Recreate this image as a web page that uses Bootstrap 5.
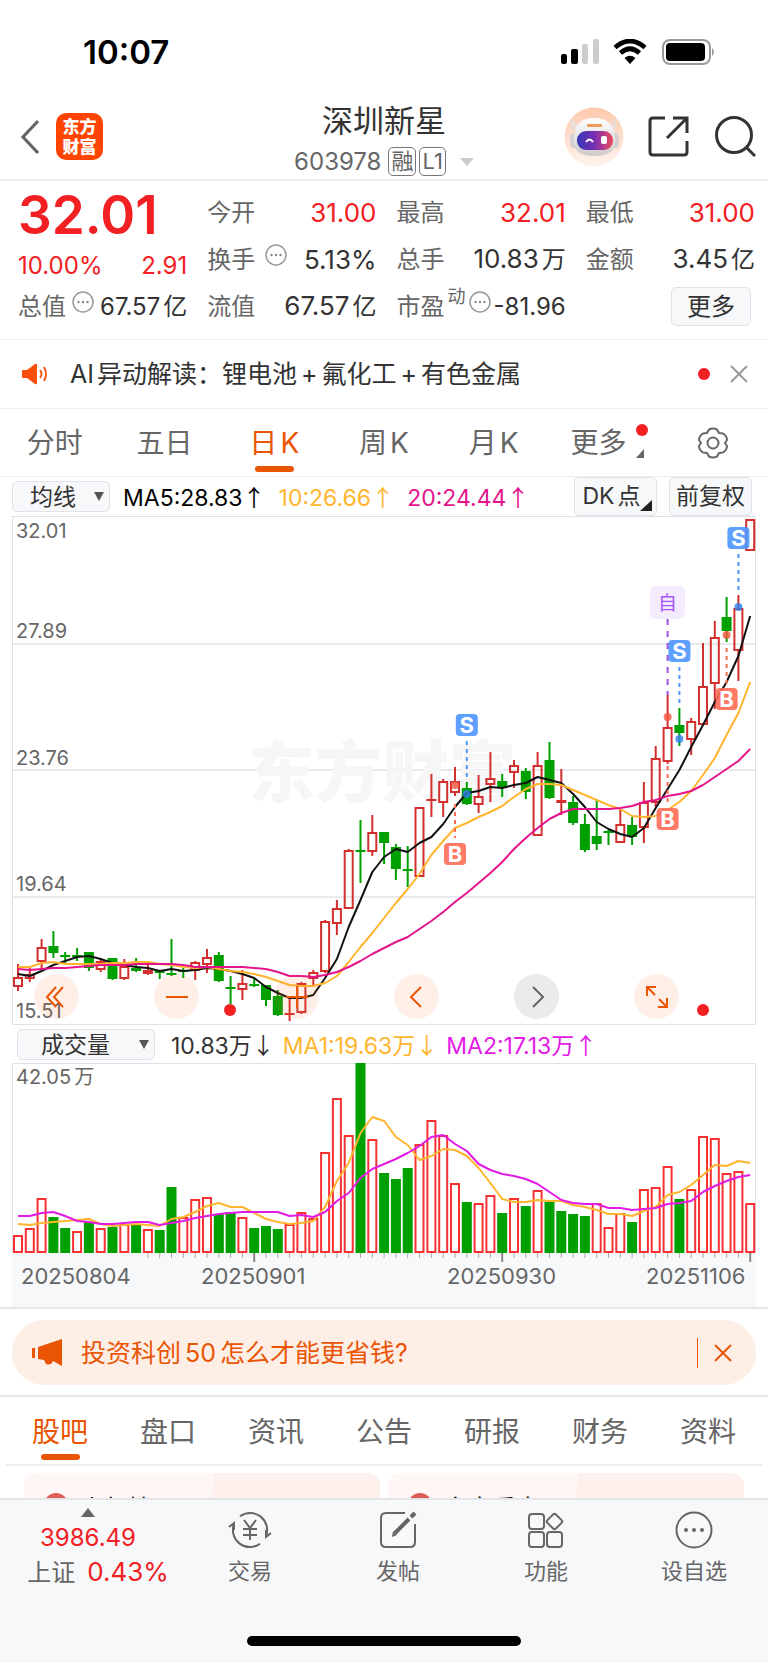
<!DOCTYPE html>
<html lang="zh-CN">
<head>
<meta charset="utf-8">
<meta name="viewport" content="width=device-width, initial-scale=1">
<title>深圳新星 603978</title>
<link href="https://cdn.jsdelivr.net/npm/bootstrap@5.3.0/dist/css/bootstrap.min.css" rel="stylesheet">
<style>
:root{--up:#f22023;--brand:#ea5504;--label:#666;--ink:#333;--rule:#e6e7eb;--panel:#f7f8fa;--cn:Inter,"Noto Sans CJK SC",sans-serif}
body{font-family:var(--cn);color:var(--ink);background:#fff;font-size:24px;line-height:32px}
button,select{font-family:inherit;color:inherit}
.plain{background:none;border:0;padding:0;line-height:1}
svg{display:block}
.up{color:var(--up)}
.lbl{color:var(--label)}
.brand{color:var(--brand)}
.rule-b{border-bottom:1px solid #efefef}
.status{height:100px;padding:3px 53px 0 83px}
.clock{font-size:33px;font-weight:600;color:#000}
.topbar{display:grid;grid-template-columns:1fr auto 1fr;height:81px;padding:0 12px 2px;border-bottom:2px solid #ececec}
.logo{width:47px;height:47px;border-radius:10px;background:#ff4400;color:#fff;font:900 17px/20px "Noto Sans CJK SC",sans-serif;padding-top:3px}
.stock{font-size:31px;line-height:40px;font-weight:400;margin:0 0 6px}
.code{font-size:24px;line-height:30px;color:var(--label);gap:3px}
.tagbox{border:1px solid #777;border-radius:5px;font-size:22px;line-height:27px;padding:0 2px}
.caret{margin-left:11px}
.quote{display:grid;grid-template-columns:repeat(4,1fr);grid-auto-rows:47px;column-gap:20px;padding:8px 13px 8px 18px;height:159px}
.quote>div{display:flex;justify-content:space-between;align-items:center}
.quote>.price{font-size:53px;line-height:47px;font-weight:600;padding-top:6px}
.quote>.change{padding-top:12px}
.num{font-size:26px}
.sup{font-size:18px;line-height:20px;align-self:flex-start}
.info{align-self:flex-start;margin-top:8px}
.more{background:var(--panel);border:1px solid #dfe2e8;border-radius:5px;width:80px;height:39px;line-height:1}
.wan{margin-left:3px}
.num .wan{font-size:24px}
.notice{height:69px;padding:0 16px 0 22px;font-size:25px}
.notice-text{margin-left:22px}
.dot{width:12px;height:12px;border-radius:50%;background:var(--up)}
.tabs{display:grid;grid-template-columns:repeat(7,1fr);font-size:28px}
.tabs a{color:var(--label);text-decoration:none;position:relative;display:flex;justify-content:center;align-items:center}
.tabs a.on{color:var(--brand)}
.tabs a.on::after{content:"";position:absolute;bottom:4px;width:39px;height:6px;border-radius:3px;background:var(--brand)}
.period{height:68px}
.tabs .more-tab{padding-right:10px}
.flag{position:absolute;top:15px;right:10px}
.corner{position:absolute;bottom:18px;right:14px}
.ma{height:39px;padding:0 16px 0 12px;font-size:23px}
.read{white-space:nowrap}
.ma .read{margin-left:13px}
.vol .read+.read{margin-left:8px}
.arr{font-family:"Noto Sans CJK SC",sans-serif}
.c-ma10{color:#ffb52e}.c-ma20{color:#e4148c}.c-vol2{color:#e31ae6}
.pick{position:relative}
.pick select{appearance:none;background:var(--panel);border:1px solid #dfe2e8;border-radius:5px;height:31px;line-height:28px;padding:0}
.pick svg{position:absolute;top:11px;right:6px;pointer-events:none}
.pick-ma select{width:98px;padding-left:17px}
.pick-vol select{width:138px;padding-left:23px}
.flat{background:var(--panel);border:1px solid #dfe2e8;border-radius:5px;width:83px;height:39px;line-height:1;padding:0;position:relative}
.flat+.flat{margin-left:12px}
.ctl{position:absolute;left:0;right:0;bottom:6px;padding-left:34px;gap:75px}
.ctl button{width:45px;height:45px;border-radius:50%;background:rgba(255,105,40,.11);display:flex;align-items:center;justify-content:center;color:var(--brand)}
.ctl button.off{background:#ebebeb;color:var(--label)}
.vol{height:38px;padding:1px 17px 0;font-size:23px}
.tip{border-top:2px solid var(--rule);border-bottom:2px solid var(--rule);padding:11px 12px 12px;height:90px}
.tip>div{background:#fdeee6;border-radius:33px;height:65px;padding:0 20px;font-size:25px}
.tip-text{margin-left:17px}
.bar{width:1px;height:30px;background:var(--brand)}
.section{height:69px;margin:0 6px;border-bottom:2px solid #ececef}
.section a{padding-top:3px}
.cards{height:32px;overflow:hidden;padding:7px 24px 0;gap:8px}
.cards>a{flex:1;height:90px;border-radius:12px;background:linear-gradient(96deg,#fff7f5 52%,#fef0ed 52%);padding:20px;gap:12px;color:#111;font-size:24px;text-decoration:none;align-items:flex-start}
.cards i{width:24px;height:24px;border-radius:50%;background:#e05a56}
.dock{flex:1;background:var(--panel);border-top:2px solid #e4e5e9}
.dock-row{display:grid;grid-template-columns:176px repeat(4,1fr);height:92px}
.dock-row a{color:var(--label);text-decoration:none;font-size:22px;line-height:30px;display:flex;flex-direction:column;align-items:center;padding-top:11px;gap:7px}
.dock-row a.index{font-size:24px;padding-top:8px;gap:0}
.index span{line-height:34px}
.index .pair{padding-left:20px}
.home{width:274px;height:10px;border-radius:5px;background:#000;margin:44px auto 0}
.axis{font-size:20px;fill:#666;font-family:var(--cn)}
.date{font-size:22px}
</style>
</head>
<body>
<div class="d-flex flex-column min-vh-100">
<div class="status d-flex justify-content-between align-items-center">
  <span class="clock">10:07</span>
  <svg width="156" height="26" viewBox="0 0 156 26">
    <g><rect x="2" y="15" width="6" height="10" rx="2"/><rect x="12" y="10" width="7" height="15" rx="2"/><rect x="23" y="5" width="6" height="20" rx="2" fill="#ccc"/><rect x="34" y="0" width="6" height="25" rx="2" fill="#ccc"/></g>
    <g fill="none" stroke="#000" stroke-width="4.6"><path d="M56 8.500Q71 -4.500 86 8.500"/><path d="M61.500 14Q71 5.500 80.500 14"/></g><path d="M65.500 19Q71 14.500 76.500 19L71 25Z"/>
    <rect x="104" y="1" width="47" height="24" rx="7" fill="none" stroke="#9a9a9a" stroke-width="2"/><rect x="107" y="4" width="39" height="18" rx="4"/><path d="M153 9q4 3.500 0 8z" fill="#999"/>
  </svg>
</div>

<header class="topbar align-items-center">
  <div class="d-flex align-items-center pb-1 ps-2">
    <button class="plain" aria-label="返回"><svg width="20" height="36" viewBox="0 0 20 36"><path d="M18 2L3 18L18 34" fill="none" stroke="#666" stroke-width="3.200"/></svg></button>
    <div class="logo text-center ms-3">东方<br>财富</div>
  </div>
  <div class="text-center">
    <h1 class="stock">深圳新星</h1>
    <div class="code d-flex align-items-center justify-content-center"><span class="me-1">603978</span><span class="tagbox">融</span><span class="tagbox">L1</span><svg class="caret" width="14" height="8"><path d="M0 0H14L7 8Z" fill="#ccc"/></svg></div>
  </div>
  <div class="d-flex align-items-center justify-content-end pb-1">
    <button class="plain" aria-label="智能助手"><svg width="60" height="60" viewBox="0 0 60 60">
      <defs><linearGradient id="peach" x2="0" y2="1"><stop stop-color="#fdc9ae"/><stop offset="1" stop-color="#fff4ee"/></linearGradient><linearGradient id="visor"><stop stop-color="#3437b5"/><stop offset=".5" stop-color="#7a2fb0"/><stop offset="1" stop-color="#ef4d5c"/></linearGradient><linearGradient id="shell" x2="0" y2="1"><stop stop-color="#fff"/><stop offset="1" stop-color="#cfcaca"/></linearGradient></defs>
      <circle cx="30" cy="30" r="29.500" fill="url(#peach)"/>
      <path d="M9 11Q4 18 10 23L16 18Q9 17 9 11ZM50 11Q55 18 50 23L44 18Q51 17 50 11Z" fill="#eaddda"/>
      <rect x="6" y="26" width="9" height="15" rx="4" fill="#d5d0d3"/><rect x="46" y="26" width="9" height="15" rx="4" fill="#d5d0d3"/>
      <path d="M10 30C11 18 17 11 30 11S50 18 51 30C52 43 46 49 30 49S9 43 10 30Z" fill="url(#shell)"/>
      <rect x="23" y="17" width="15" height="3" rx="1" fill="#ef9a55"/>
      <rect x="13" y="24" width="36" height="19" rx="9" fill="url(#visor)"/>
      <path d="M22 35q3.500-5 7 0" fill="none" stroke="#fff" stroke-width="2"/><rect x="37" y="29" width="6" height="8" rx="2" fill="#fff"/></svg></button>
    <button class="plain ms-4" aria-label="分享"><svg width="42" height="42" viewBox="0 0 42 42" fill="none" stroke="#333" stroke-width="3"><path d="M17 2H5Q2 2 2 5V36Q2 39 5 39H36Q39 39 39 36V25M25 2H39V17M38 3L19 22"/></svg></button>
    <button class="plain ms-4" aria-label="搜索"><svg width="42" height="42" viewBox="0 0 42 42" fill="none" stroke="#333" stroke-width="3"><circle cx="20" cy="19" r="17.500"/><path d="M32 31L41 40"/></svg></button>
  </div>
</header>

<section class="quote rule-b">
  <div class="price up">32.01</div>
  <div><span class="lbl">今开</span><span class="num up">31.00</span></div>
  <div><span class="lbl">最高</span><span class="num up">32.01</span></div>
  <div><span class="lbl">最低</span><span class="num up">31.00</span></div>
  <div class="change up"><span>10.00%</span><span>2.91</span></div>
  <div><span class="lbl">换手</span><svg class="info me-2" width="22" height="22"><use href="#info"/></svg><span class="num">5.13%</span></div>
  <div><span class="lbl">总手</span><span class="num">10.83<span class="wan">万</span></span></div>
  <div><span class="lbl">金额</span><span class="num">3.45<span class="wan">亿</span></span></div>
  <div><span class="lbl">总值</span><svg class="info" width="22" height="22"><use href="#info"/></svg><span>67.57<span class="wan">亿</span></span></div>
  <div><span class="lbl">流值</span><span class="num">67.57<span class="wan">亿</span></span></div>
  <div><span class="lbl">市盈</span><span class="sup lbl mt-1">动</span><svg class="info" width="22" height="22"><use href="#info"/></svg><span>-81.96</span></div>
  <div class="justify-content-end pe-1"><button class="more">更多</button></div>
</section>
<svg class="d-none"><symbol id="info" viewBox="0 0 22 22"><circle cx="11" cy="11" r="10" fill="none" stroke="#999" stroke-width="1.500"/><g fill="#888"><circle cx="6.500" cy="11" r="1.200"/><circle cx="11" cy="11" r="1.200"/><circle cx="15.500" cy="11" r="1.200"/></g></symbol></svg>

<section class="notice rule-b d-flex align-items-center">
  <svg width="26" height="22" viewBox="0 0 26 22"><path d="M1 7H5L13 1Q15 0 15 2V20Q15 22 13 21L5 15H1Q0 15 0 14V8Q0 7 1 7Z" fill="#fa4d05"/><g fill="none" stroke="#fa4d05" stroke-width="1.800"><path d="M18 7q3 4 0 8M22 4q4 7 0 14"/></g></svg>
  <span class="notice-text">AI<span class="wan">异动解读：锂电池</span><span class="mx-1">+</span>氟化工<span class="mx-1">+</span>有色金属</span>
  <span class="dot ms-auto"></span>
  <button class="plain ms-3 px-1" aria-label="关闭"><svg width="18" height="18"><path d="M1 1L17 17M17 1L1 17" stroke="#999" stroke-width="2"/></svg></button>
</section>

<nav class="tabs period rule-b">
  <a href="#">分时</a><a href="#">五日</a><a href="#" class="on">日<span class="wan">K</span></a><a href="#">周<span class="wan">K</span></a><a href="#">月<span class="wan">K</span></a>
  <a href="#" class="more-tab">更多<span class="dot flag"></span><svg class="corner" width="8" height="9"><path d="M8 0V9H0Z" fill="#666"/></svg></a>
  <a href="#" aria-label="设置"><svg width="32" height="32" viewBox="0 0 32 32" fill="none" stroke="#666" stroke-width="2"><path d="M12 2.500Q16 .500 20 2.500L22 6L26 6.500Q30 9 30 13L28 16L30 19Q30 23 26 25.500L22 26L20 29.500Q16 31.500 12 29.500L10 26L6 25.500Q2 23 2 19L4 16L2 13Q2 9 6 6.500L10 6Z" stroke-linejoin="round"/><circle cx="16" cy="16" r="5.500"/></svg></a>
</nav>

<div class="ma d-flex align-items-center">
  <div class="pick pick-ma"><select aria-label="指标"><option>均线</option></select><svg width="10" height="9"><path d="M0 0H10L5 9Z" fill="#555"/></svg></div>
  <span class="read text-black">MA5:28.83<span class="arr">↑</span></span>
  <span class="read c-ma10">10:26.66<span class="arr">↑</span></span>
  <span class="read c-ma20">20:24.44<span class="arr">↑</span></span>
  <button class="flat ms-auto"><span class="me-2">DK<span class="wan">点</span></span><svg class="position-absolute bottom-0 end-0 m-1" width="12" height="11"><path d="M12 0V11H0Z" fill="#222"/></svg></button>
  <button class="flat">前复权</button>
</div>

<div class="position-relative">
  <svg id="kline" width="100%" viewBox="0 0 768 509" role="img" aria-label="日K线"></svg>
  <div class="ctl d-flex">
    <button class="plain" aria-label="最早"><svg width="24" height="22" fill="none" stroke="currentColor" stroke-width="2"><path d="M11 1L2 11L11 21M18 1L9 11L18 21"/></svg></button>
    <button class="plain" aria-label="缩小"><svg width="22" height="22" stroke="currentColor" stroke-width="2"><path d="M0 11H22"/></svg></button>
    <button class="plain" aria-label="放大"><svg width="22" height="22" stroke="currentColor" stroke-width="2"><path d="M0 11H22M11 0V22"/></svg></button>
    <button class="plain" aria-label="向左"><svg width="16" height="22" fill="none" stroke="currentColor" stroke-width="2"><path d="M12 1L2 11L12 21"/></svg></button>
    <button class="plain off" aria-label="向右"><svg width="14" height="22" fill="none" stroke="currentColor" stroke-width="2"><path d="M3 1L13 11L3 21"/></svg></button>
    <button class="plain" aria-label="全屏"><svg width="24" height="24" fill="none" stroke="currentColor" stroke-width="2"><path d="M2 11V2H11M2 2L10 10M22 13V22H13M22 22L14 14"/></svg></button>
  </div>
</div>

<div class="vol d-flex align-items-center">
  <div class="pick pick-vol"><select aria-label="副图指标"><option>成交量</option></select><svg width="10" height="9"><path d="M0 0H10L5 9Z" fill="#555"/></svg></div>
  <span class="read ms-3">10.83万<span class="arr">↓</span></span>
  <span class="read c-ma10">MA1:19.63万<span class="arr">↓</span></span>
  <span class="read c-vol2">MA2:17.13万<span class="arr">↑</span></span>
</div>
<svg id="volume" width="100%" viewBox="0 0 768 244" role="img" aria-label="成交量"></svg>

<section class="tip"><div class="d-flex align-items-center">
  <svg width="32" height="28" viewBox="0 0 32 28" fill="#ea5504"><path d="M0 9H3V19H0ZM6 8L30 0V27L21 22Q19 27 14 25L12 21L6 20Z"/></svg>
  <span class="brand tip-text">投资科创<span class="mx-1">50</span>怎么才能更省钱?</span>
  <span class="bar ms-auto"></span>
  <button class="plain ms-3 me-1" aria-label="关闭"><svg width="18" height="18"><path d="M1 1L17 17M17 1L1 17" stroke="#ea5504" stroke-width="2"/></svg></button>
</div></section>

<nav class="tabs section"><a href="#" class="on">股吧</a><a href="#">盘口</a><a href="#">资讯</a><a href="#">公告</a><a href="#">研报</a><a href="#">财务</a><a href="#">资料</a></nav>
<div class="cards d-flex"><a class="d-flex" href="#"><i></i>人气榜</a><a class="d-flex" href="#"><i></i>多空看盘</a></div>

<footer class="dock">
  <nav class="dock-row">
    <a href="#" class="index"><svg width="14" height="9"><path d="M7 0L14 9H0Z" fill="#666"/></svg><span class="up pt-1">3986.49</span><span class="pair text-nowrap"><span class="me-2 pe-1">上证</span><span class="num up">0.43%</span></span></a>
    <a href="#"><svg width="44" height="38" viewBox="0 0 44 38" fill="none" stroke="#666" stroke-width="2"><path d="M12 5.300A17 17 0 0 1 38 25M43 22L38 26V19M32 32.700A17 17 0 0 1 6 13M1 16L6 12V19"/><path d="M16 9L22 17L28 9M22 17V29M15 18H29M15 24H29"/></svg>交易</a>
    <a href="#"><svg width="38" height="38" viewBox="0 0 38 38" fill="none" stroke="#666" stroke-width="2"><path d="M26 2H7Q2 2 2 7V31Q2 36 7 36H31Q36 36 36 31V13"/><path d="M16 22L30 8" stroke-width="4"/><path d="M13 26L14 20L18 24Z" fill="#666" stroke="none"/><path d="M32 6L36 2" stroke-width="4"/></svg>发帖</a>
    <a href="#"><svg width="38" height="38" viewBox="0 0 38 38" fill="none" stroke="#666" stroke-width="2"><rect x="2" y="3" width="15" height="15" rx="3"/><rect x="2" y="21" width="15" height="15" rx="3"/><rect x="20" y="21" width="15" height="15" rx="3"/><rect x="21.500" y="4.500" width="12" height="12" rx="2" transform="rotate(45 27.500 10.500)"/></svg>功能</a>
    <a href="#"><svg width="38" height="38" viewBox="0 0 38 38"><circle cx="19" cy="19" r="17.500" fill="none" stroke="#666" stroke-width="2"/><g fill="#666"><circle cx="11" cy="19" r="2"/><circle cx="19" cy="19" r="2"/><circle cx="27" cy="19" r="2"/></g></svg>设自选</a>
  </nav>
  <div class="home"></div>
</footer>
</div>

<script src="https://cdn.jsdelivr.net/npm/bootstrap@5.3.0/dist/js/bootstrap.bundle.min.js"></script>
<script>
const X = i => +(18 + i * 11.81).toFixed(1);
// one candle per day: colour, high, body top, body bottom, low
const candles = `r448,461,471,475 r452,458,463,466 r423,431,446,452 g415,430,437,442 g436,439,441,447 g432,439,441,445 g436,436,452,455 r442,445,454,456 g442,442,463,464 r443,450,463,464 g442,452,455,456 r449,454,458,459 g455,455,457,463 g423,457,459,460 g452,454,456,462 r445,446,455,464 r433,441,449,457 g436,439,465,466 g460,471,473,488 r454,467,474,484 g462,468,470,471 g469,469,484,490 g474,480,499,500 r481,497,499,505 r466,467,497,498 r454,456,463,469 r404,405,456,457 r384,392,408,419 r333,334,393,393 g304,334,336,367 r299,316,336,340 g316,316,327,348 g328,331,353,364 g330,353,355,371 r291,291,361,361 r258,283,285,301 r263,265,287,301 r251,265,277,280 g266,272,288,289 r259,280,289,297 r236,262,269,286 g258,265,272,281 r244,249,257,272 g252,255,276,283 r236,249,320,320 g226,244,282,283 r253,284,287,299 g280,286,307,309 g298,308,334,336 g284,320,328,334 g313,315,317,329 r293,308,327,327 g301,309,321,329 r266,286,312,327 r230,242,287,291 r179,211,246,248 g192,209,217,230 r202,205,224,239 r127,170,209,209 r105,121,168,193 g81,101,115,126 r79,92,135,165 r3,3,35,35`.split(' ');
const ma5 = [458,460,455,449,445,441,440,443,447,449,451,452,455,453,455,454,452,453,455,458,462,471,477,482,482,479,462,443,411,384,356,341,333,336,327,321,308,291,277,275,271,272,269,267,261,264,267,278,291,306,313,318,321,312,292,273,254,231,209,186,166,140,100];
const ma10 = [451,451,447,446,448,448,448,448,447,447,446,446,448,449,451,452,451,453,455,456,458,461,465,469,470,470,467,460,446,431,417,402,387,373,358,339,325,312,307,301,296,290,281,273,268,268,269,274,279,284,289,293,300,301,300,294,286,275,259,242,219,197,166];
const ma20 = [453,454,453,452,452,451,450,449,449,449,448,448,448,448,449,451,451,451,451,451,452,453,456,460,460,461,459,456,451,445,438,432,426,421,413,405,396,386,377,367,357,346,333,322,312,303,297,293,293,293,293,292,290,286,284,280,278,275,269,261,253,245,233];
const vols = `r172 r165 r135 g154 g165 r168 g159 r165 g164 r161 g162 r166 g167 g124 r154 r136 r134 g151 g149 r154 g165 g163 g166 r161 r149 r155 r89 r35 r72 g0 r76 g110 g116 g105 r81 r57 r72 r120 g139 r140 r132 g150 r135 g143 r127 g139 g148 g151 g153 r140 r164 r150 g159 r126 r124 r103 g136 r126 r73 r75 r110 r108 r140`.split(' ');
const v1 = [161,162,160,159,158,157,156,161,163,162,161,162,163,156,154,149,143,140,144,144,150,156,159,161,160,158,144,118,100,70,54,58,74,82,97,93,86,87,93,105,120,136,139,139,137,138,138,142,144,147,151,151,153,148,144,132,129,122,112,102,103,98,100];
const v2 = [153,153,150,149,153,158,159,161,161,160,159,159,162,160,158,155,153,151,150,149,149,149,149,153,152,154,149,138,130,115,106,101,96,90,83,74,72,81,88,101,107,111,113,116,121,129,137,140,141,141,145,145,147,146,145,141,140,138,129,123,118,114,112];
const line = (a, c) => `<polyline fill="none" stroke="${c}" stroke-width="2" stroke-linejoin="round" points="${a.map((y, i) => X(i) + ',' + y).join(' ')}"/>`;
const R = '#d42f2f', G = '#00a000';

let k = '<g stroke="#e8eaef" stroke-width="2"><path d="M13 128H755M13 254H755M13 381H755"/></g><rect x="12.5" y=".5" width="743" height="508" fill="none" stroke="#dfe1e6"/>';
k += '<text x="248" y="281" font-size="67" font-weight="900" fill="#f6f6f6" font-family="Noto Sans CJK SC,sans-serif">东方财富</text>';
candles.forEach((c, i) => {
  const [h, t, b, l] = c.slice(1).split(',').map(Number), x = X(i), red = c[0] === 'r', col = red ? R : G;
  k += `<path d="M${x} ${h}V${red ? t : l}${red ? `M${x} ${b}V${l}` : ''}" stroke="${col}" stroke-width="2"/>`;
  k += red && b - t > 3
    ? `<rect x="${x - 4}" y="${t + 1}" width="8" height="${b - t - 2}" fill="none" stroke="${col}" stroke-width="2"/>`
    : `<rect x="${x - 5}" y="${t}" width="10" height="${b - t}" fill="${col}"/>`;
});
k += line(ma5, '#111') + line(ma10, '#ffb52e') + line(ma20, '#e4148c');
// trade marks: bar index, letter, badge centre, dashed line from/to, anchor dot
[[38,'S',209,225,264,278],[56,'S',135,151,188,223],[61,'S',22,38,74,91],[37,'B',338,288,322,269],[55,'B',303,250,288,201],[60,'B',183,132,168,119]].forEach(([i, s, y, a, b, d]) => {
  const x = X(i), c = s === 'S' ? '#2f80ee' : '#f5533d', f = s === 'S' ? '#4d96ff' : '#ff6b57';
  k += `<path d="M${x} ${a}V${b}" stroke="${f}" stroke-width="2" stroke-dasharray="4 4"/><circle cx="${x}" cy="${d}" r="4" fill="${c}" fill-opacity=".8"/>`;
  k += `<rect x="${x - 11}" y="${y - 11}" width="22" height="22" rx="4" fill="${f}" fill-opacity=".9"/><text x="${x}" y="${y + 8}" text-anchor="middle" font-size="22" font-weight="700" fill="#fff" font-family="Inter,sans-serif">${s}</text>`;
});
k += `<path d="M${X(55)} 103V179" stroke="#9b51e0" stroke-width="2" stroke-dasharray="6 6"/><rect x="650" y="70" width="35" height="33" rx="6" fill="#f4ebfe"/><text x="667.5" y="94" text-anchor="middle" font-size="19" fill="#a855f7" font-family="Noto Sans CJK SC,sans-serif">自</text>`;
k += '<circle cx="230" cy="494" r="6" fill="#f22023"/><circle cx="703" cy="494" r="6" fill="#f22023"/>';
[['32.01',22],['27.89',122],['23.76',249],['19.64',375],['15.51',502]].forEach(([s, y]) => k += `<text class="axis" x="16" y="${y}">${s}</text>`);
kline.innerHTML = k;

let v = '<rect x="12" y="190" width="744" height="54" fill="#f7f8fa"/><path d="M12.500 190V.500H755.500V190" fill="none" stroke="#dfe1e6"/>';
vols.forEach((s, i) => {
  const x = X(i), t = +s.slice(1);
  v += s[0] === 'r' ? `<rect x="${x - 4}" y="${t + 1}" width="8" height="${188 - t}" fill="#fff" stroke="#f73131" stroke-width="2"/>` : `<rect x="${x - 5}" y="${t}" width="10" height="${190 - t}" fill="${G}"/>`;
  if (i > 10) v += [20, 41, 62].includes(i) ? `<path d="M${x} 190V199" stroke="#888" stroke-width="2"/>` : `<path d="M${x} 190V195" stroke="#aaa"/>`;
});
v += line(v1, '#ffb52e') + line(v2, '#e31ae6');
v += '<text class="axis" x="16" y="21">42.05<tspan dx="3">万</tspan></text>';
[['20250804',21],['20250901',201],['20250930',447],['20251106',646]].forEach(([s, x]) => v += `<text class="axis date" x="${x}" y="221">${s}</text>`);
volume.innerHTML = v;
</script>
</body>
</html>
